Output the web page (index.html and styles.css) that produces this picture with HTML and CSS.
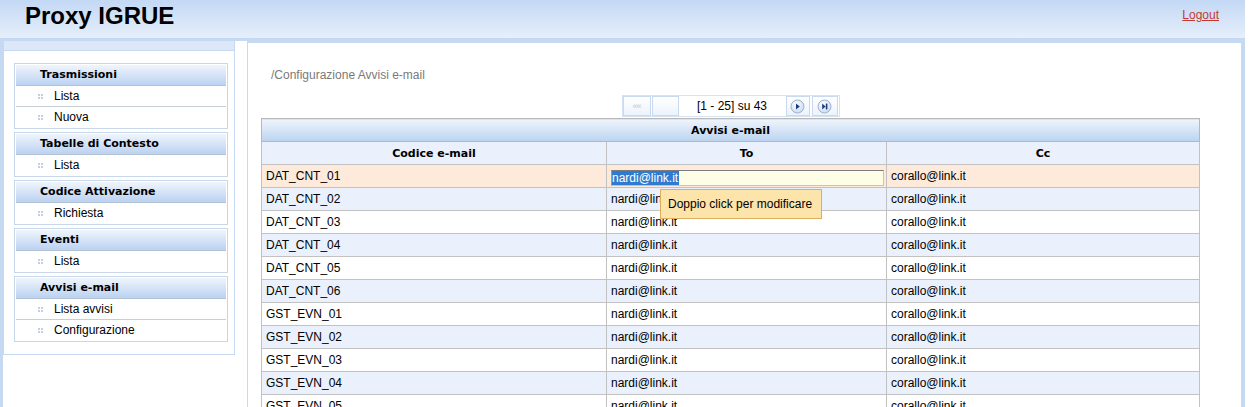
FILE: index.html
```html
<!DOCTYPE html>
<html lang="it">
<head>
<meta charset="utf-8">
<title>Proxy IGRUE</title>
<link rel="stylesheet" href="styles.css">
</head>
<body>
<div class="page">
  <header class="top">
    <h1 class="title">Proxy IGRUE</h1>
    <a class="logout" href="#">Logout</a>
  </header>
  <div class="main">
    <aside class="side">
      <div class="side-panel">
        <div class="side-cap"></div>
        <nav class="menu">
          <div class="group">
            <div class="group-head">Trasmissioni</div>
            <div class="item">Lista</div>
            <div class="item">Nuova</div>
          </div>
          <div class="group">
            <div class="group-head">Tabelle di Contesto</div>
            <div class="item">Lista</div>
          </div>
          <div class="group">
            <div class="group-head">Codice Attivazione</div>
            <div class="item">Richiesta</div>
          </div>
          <div class="group">
            <div class="group-head">Eventi</div>
            <div class="item">Lista</div>
          </div>
          <div class="group">
            <div class="group-head">Avvisi e-mail</div>
            <div class="item">Lista avvisi</div>
            <div class="item">Configurazione</div>
          </div>
        </nav>
      </div>
    </aside>
    <section class="content">
      <div class="crumb">/Configurazione Avvisi e-mail</div>
      <div class="grid-wrap">
        <div class="pager-row">
          <div class="pager">
            <span class="pbtn b-first">&laquo;&laquo;</span>
            <span class="pbtn b-prev"></span>
            <span class="pinfo">[1 - 25] su 43</span>
            <span class="pbtn b-next">
              <svg width="15" height="15" viewBox="0 0 15 15"><defs><radialGradient id="gn" cx="40%" cy="35%" r="70%"><stop offset="0" stop-color="#ffffff"/><stop offset="1" stop-color="#c6d9f2"/></radialGradient></defs><circle cx="7.5" cy="7.5" r="6.5" fill="url(#gn)" stroke="#9fb3cc"/><path d="M6 4.6 L9.8 7.5 L6 10.4 Z" fill="#1b3d7a"/></svg>
            </span>
            <span class="pbtn b-last">
              <svg width="15" height="15" viewBox="0 0 15 15"><defs><radialGradient id="gl" cx="40%" cy="35%" r="70%"><stop offset="0" stop-color="#ffffff"/><stop offset="1" stop-color="#c6d9f2"/></radialGradient></defs><circle cx="7.5" cy="7.5" r="6.5" fill="url(#gl)" stroke="#9fb3cc"/><path d="M5.2 4.6 L8.6 7.5 L5.2 10.4 Z" fill="#1b3d7a"/><rect x="8.8" y="4.6" width="1.6" height="5.8" fill="#1b3d7a"/></svg>
            </span>
          </div>
        </div>
        <div class="table-box">
          <table class="grid">
            <colgroup><col class="c1"><col class="c2"><col class="c3"></colgroup>
            <thead>
              <tr><th class="cap" colspan="3">Avvisi e-mail</th></tr>
              <tr class="colhead"><th>Codice e-mail</th><th>To</th><th>Cc</th></tr>
            </thead>
            <tbody>
              <tr class="sel"><td>DAT_CNT_01</td><td class="edit"><div class="inp"><span class="hl">nardi@link.it</span></div></td><td>corallo@link.it</td></tr>
              <tr><td>DAT_CNT_02</td><td>nardi@link.it</td><td>corallo@link.it</td></tr>
              <tr><td>DAT_CNT_03</td><td>nardi@link.it</td><td>corallo@link.it</td></tr>
              <tr><td>DAT_CNT_04</td><td>nardi@link.it</td><td>corallo@link.it</td></tr>
              <tr><td>DAT_CNT_05</td><td>nardi@link.it</td><td>corallo@link.it</td></tr>
              <tr><td>DAT_CNT_06</td><td>nardi@link.it</td><td>corallo@link.it</td></tr>
              <tr><td>GST_EVN_01</td><td>nardi@link.it</td><td>corallo@link.it</td></tr>
              <tr><td>GST_EVN_02</td><td>nardi@link.it</td><td>corallo@link.it</td></tr>
              <tr><td>GST_EVN_03</td><td>nardi@link.it</td><td>corallo@link.it</td></tr>
              <tr><td>GST_EVN_04</td><td>nardi@link.it</td><td>corallo@link.it</td></tr>
              <tr><td>GST_EVN_05</td><td>nardi@link.it</td><td>corallo@link.it</td></tr>
              <tr><td>GST_EVN_06</td><td>nardi@link.it</td><td>corallo@link.it</td></tr>
            </tbody>
          </table>
          <div class="tip">Doppio click per modificare</div>
        </div>
      </div>
    </section>
  </div>
</div>
</body>
</html>
```
FILE: styles.css
```css
* { box-sizing: border-box; }
html, body { margin: 0; padding: 0; }
body {
  font-family: "Liberation Sans", Arial, sans-serif;
  font-size: 12px;
  color: #000;
  background: #fff;
  overflow: hidden;
}
.page { width: 1245px; }

/* header */
.top {
  height: 38px;
  display: flex;
  justify-content: space-between;
  align-items: flex-start;
  padding: 0 26px 0 25px;
  background: linear-gradient(#c3d8f4, #e6effb);
}
.title {
  margin: 0;
  padding-top: 2px;
  font: bold 24px/28px "Liberation Sans", Arial, sans-serif;
  color: #000;
}
.logout {
  margin-top: 8px;
  font-size: 12px;
  line-height: 14px;
  color: #c43a32;
  text-decoration: underline;
}

/* main */
.main {
  display: flex;
  border-top: 3px solid #c6d9f2;
  border-left: 3px solid #c6d9f2;
  border-right: 4px solid #c6d9f2;
  min-height: 380px;
}
.side { width: 244px; flex: none; }
.side-panel {
  width: 232px;
  border: 1px solid #c6d9f2;
  border-top: 0;
  padding-bottom: 9px;
}
.side-cap {
  height: 10px;
  background: #dce8f8;
  border-bottom: 1px solid #c6d9f2;
}
.menu { margin: 12px 6px 0 10px; }
.group {
  border: 1px solid #c8d8ea;
  padding: 1px;
  margin-bottom: 3px;
}
.group-head {
  height: 21px;
  padding-left: 24px;
  font: bold 11px/20px "DejaVu Sans", Verdana, sans-serif;
  background: linear-gradient(#f0f5fc, #bbd2f1);
  border-bottom: 1px solid #b3c3d6;
}
.item {
  height: 21px;
  line-height: 20px;
  padding-left: 22px;
  border-bottom: 1px solid #c8ced6;
  display: flex;
  align-items: center;
}
.item:last-child { border-bottom: 0; height: 20px; }
.item::before {
  content: "";
  width: 2px;
  height: 2px;
  margin-right: 14px;
  background: #c3d0e0;
  box-shadow: 3px 0 #c3d0e0, 0 3px #c3d0e0, 3px 3px #c3d0e0;
  align-self: center;
  transform: translateY(-1px);
}

/* content */
.content {
  flex: 1;
  border-left: 1px solid #c6d9f2;
  border-top: 2px solid #c6d9f2;
  padding: 25px 0 0 13px;
}
.crumb {
  padding-left: 10px;
  line-height: 14px;
  color: #7a7a7a;
  margin-bottom: 13px;
}
.grid-wrap { width: 938px; }
.pager-row { display: flex; justify-content: center; padding-left: 1px; margin-bottom: 1px; }
.pager {
  display: flex;
  align-items: stretch;
  height: 22px;
  border: 1px solid #d6e3f4;
  padding-right: 1px;
}
.pbtn {
  display: flex;
  align-items: center;
  justify-content: center;
  border: 1px solid #c9daf0;
  background: linear-gradient(#ffffff, #edf3fb);
}
.b-first { width: 28px; margin-right: 1px; font-size: 9px; color: #b7c6dc; letter-spacing: -1px; }
.b-prev { width: 27px; }
.pinfo {
  width: 106px;
  display: flex;
  align-items: center;
  justify-content: center;
  padding-left: 1px;
}
.b-next { width: 24px; margin-left: 1px; margin-right: 2px; }
.b-last { width: 26px; }
.pbtn svg { display: block; }

.table-box { position: relative; }
.grid {
  width: 938px;
  table-layout: fixed;
  border-collapse: collapse;
  border: 1px solid #b8b8b8;
}
.c1 { width: 345px; }
.c2 { width: 280px; }
.c3 { width: 313px; }
.grid th, .grid td {
  height: 23px;
  border: 1px solid #c2c2c2;
  padding: 0 4px;
  white-space: nowrap;
  overflow: hidden;
}
.grid th {
  font: bold 11px "DejaVu Sans", Verdana, sans-serif;
  text-align: center;
}
.grid th.cap {
  background: linear-gradient(#eef4fc, #bcd3f0);
  border-color: #b8b8b8;
}
.colhead th { background: #eaf1fc; }
.grid td { font-size: 12px; text-align: left; }
.grid tbody tr:nth-child(even) td { background: #eaf0fc; }
.grid tbody tr.sel td { background: #fdeadb; }
.grid td.edit { vertical-align: bottom; padding: 0 2px 1px 4px; }
.inp {
  height: 16px;
  background: #fefee6;
  border: 1px solid #c4c4c4;
  border-top-color: #7c7c7c;
  border-left-color: #9a9a9a;
  line-height: 14px;
  overflow: hidden;
}
.hl {
  display: inline-block;
  background: #2f7bd0;
  color: #fff;
  line-height: 14px;
  padding: 0 1px 0 0;
}
.tip {
  position: absolute;
  left: 399px;
  top: 71px;
  width: 162px;
  height: 30px;
  padding-left: 7px;
  line-height: 28px;
  background: #fde4aa;
  border: 1px solid #dcae5e;
  font-size: 12px;
  white-space: nowrap;
}
```
